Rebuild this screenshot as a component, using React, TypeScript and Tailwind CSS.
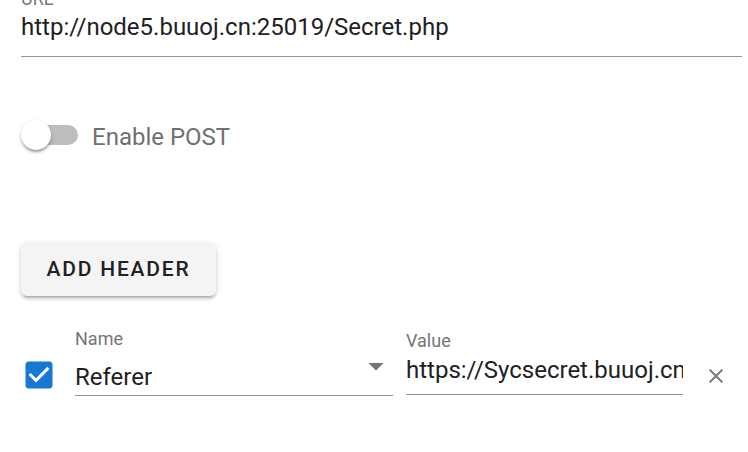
export default function App() {
  return (
    <div className="w-[748px] h-[452px] overflow-hidden bg-white font-['Roboto',sans-serif] text-[#212121]">
      <div className="pl-[21px] pr-[6px]">
        {/* url field */}
        <div className="-mt-[10px]">
          <div className="text-[18px] leading-[18px] text-[#757575]">URL</div>
          <div className="mt-[5px] h-[44px] border-b border-[#949494] text-[24px] leading-[28px] whitespace-nowrap">
            http://node5.buuoj.cn:25019/Secret.php
          </div>
        </div>

        {/* post switch */}
        <div className="mt-[63px] flex h-[30px] items-start">
          <div className="relative h-[30px] w-[57px] shrink-0">
            <div className="absolute left-[6px] top-[5px] h-[20px] w-[51px] rounded-full bg-[#bdbdbd]" />
            <div className="absolute left-0 top-0 h-[30px] w-[30px] rounded-full bg-white shadow-[0_3px_2px_-1px_rgba(0,0,0,0.2),0_2px_3px_0_rgba(0,0,0,0.14),0_2px_5px_0_rgba(0,0,0,0.12)]" />
          </div>
          <span className="ml-[14px] mt-[2px] text-[24px] leading-[30px] text-[#707070]">Enable POST</span>
        </div>

        {/* add header */}
        <button className="mt-[93px] block h-[53px] w-[195px] rounded-[6px] bg-[#f4f4f4] text-center text-[21px] font-medium leading-[53px] tracking-[1.8px] text-[#212121] shadow-[0_4px_2px_-3px_rgba(0,0,0,0.2),0_3px_3px_0_rgba(0,0,0,0.14),0_1px_7px_0_rgba(0,0,0,0.12)]">
          ADD HEADER
        </button>

        {/* header row */}
        <div className="mt-[34px] flex items-start">
          <div className="w-[54px] shrink-0">
            <svg viewBox="0 0 24 24" className="ml-[-0.5px] mt-[26.5px] h-[36px] w-[36px]" fill="#1976d2">
              <path d="M19 3H5c-1.11 0-2 .9-2 2v14c0 1.1.89 2 2 2h14c1.11 0 2-.9 2-2V5c0-1.1-.89-2-2-2zm-9 14l-5-5 1.41-1.41L10 14.17l7.59-7.59L19 8l-9 9z" />
            </svg>
          </div>

          <div className="relative w-[318px] shrink-0">
            <div className="text-[18px] leading-[18px] text-[#757575]">Name</div>
            <div className="mt-[15px] h-[33px] border-b border-[#949494] text-[24px] leading-[28px]">Referer</div>
            <svg viewBox="0 0 24 24" className="absolute left-[282.5px] top-[18px] h-[36px] w-[36px]" fill="#757575">
              <path d="M7 10l5 5 5-5z" />
            </svg>
          </div>

          <div className="ml-[13px] mt-[2px] w-[277px] shrink-0">
            <div className="text-[18px] leading-[18px] text-[#757575]">Value</div>
            <div className="mt-[6px] h-[39px] overflow-hidden whitespace-nowrap border-b border-[#949494] text-[24px] leading-[28px]">
              https://Sycsecret.buuoj.cn
            </div>
          </div>

          <svg viewBox="0 0 24 24" className="ml-[21px] mt-[34px] h-[24px] w-[24px] shrink-0" fill="#7a7a7a">
            <path d="M19 6.41L17.59 5 12 10.59 6.41 5 5 6.41 10.59 12 5 17.59 6.41 19 12 13.41 17.59 19 19 17.59 13.41 12z" />
          </svg>
        </div>
      </div>
    </div>
  );
}
